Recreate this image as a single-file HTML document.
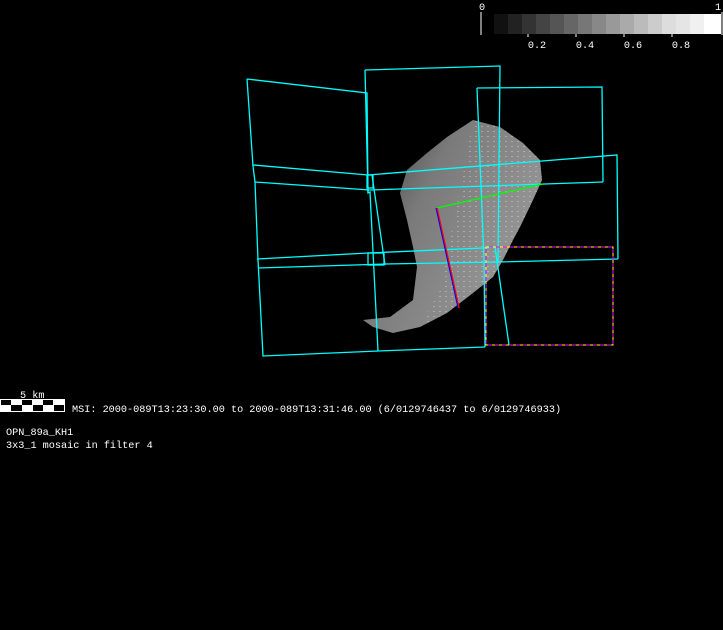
<!DOCTYPE html>
<html><head><style>
html,body{margin:0;padding:0;background:#000;width:723px;height:630px;overflow:hidden}
svg{display:block}
text{font-family:"Liberation Mono",monospace;font-size:10.2px;fill:#fff}
</style></head><body>
<svg width="723" height="630" viewBox="0 0 723 630">
<defs>
<linearGradient id="g" x1="0" y1="0" x2="1" y2="0.6">
<stop offset="0" stop-color="#3a3a3a"/><stop offset="0.4" stop-color="#7a7a7a"/><stop offset="1" stop-color="#9a9a9a"/>
</linearGradient>
<pattern id="dots" width="6" height="5" patternUnits="userSpaceOnUse">
<rect x="1" y="1" width="2" height="1" fill="#ccc"/>
</pattern>
</defs>
<polygon points="473,120 500,127 523,143 540,160 542,180 533,200 520,227 513,240 503,260 493,277 473,293 447,313 420,327 393,333 373,327 363,320 390,317 413,300 417,267 413,247 407,220 400,193 407,170 427,153 447,137" fill="url(#g)"/>
<polygon points="473,120 500,127 523,143 540,160 542,180 533,200 520,227 513,240 503,260 493,277 473,293 447,313 420,327 440,290 450,240 460,190" fill="url(#dots)" opacity="0.5"/>
<g fill="none" stroke="#0ff" stroke-width="1.3">
<polyline points="247,79 367,93 368,193"/>
<polyline points="247,79 253,166 255,182 258,260 263,356 378,351 485,347"/>
<polyline points="365,70 500,66 498,262"/>
<polyline points="365,70 368,193 370,192 378,351"/>
<polyline points="477,88 602,87 603,182"/>
<polyline points="477,88 484,260 485,347"/>
<polyline points="372,175 385,265"/>
<polyline points="253,165 368,175 617,155 618,259"/>
<polyline points="255,182 370,190 603,182"/>
<polyline points="257,259 368,253 483,248 495,247"/>
<polyline points="258,268 385,264 498,262 618,259"/>
<line x1="495" y1="247" x2="509" y2="345"/>
<rect x="368" y="253" width="16" height="12"/>
<rect x="367" y="175" width="6" height="13"/>
</g>
<rect x="486" y="247" width="127" height="98" fill="none" stroke="#ff0" stroke-dasharray="4,3"/>
<rect x="486" y="247" width="127" height="98" fill="none" stroke="#f0f" stroke-dasharray="4,3" stroke-dashoffset="4"/>
<line x1="437" y1="208" x2="543" y2="184" stroke="#0f0" stroke-width="1.3"/>
<line x1="437" y1="208" x2="459" y2="308" stroke="#f00" stroke-width="1.5"/>
<line x1="436" y1="208" x2="458" y2="308" stroke="#00f" stroke-width="1"/>
<g>
<rect x="494" y="14" width="14" height="20" fill="#111"/><rect x="508" y="14" width="14" height="20" fill="#222"/>
<rect x="522" y="14" width="14" height="20" fill="#333"/><rect x="536" y="14" width="14" height="20" fill="#444"/>
<rect x="550" y="14" width="14" height="20" fill="#555"/><rect x="564" y="14" width="14" height="20" fill="#666"/>
<rect x="578" y="14" width="14" height="20" fill="#777"/><rect x="592" y="14" width="14" height="20" fill="#888"/>
<rect x="606" y="14" width="14" height="20" fill="#999"/><rect x="620" y="14" width="14" height="20" fill="#aaa"/>
<rect x="634" y="14" width="14" height="20" fill="#bbb"/><rect x="648" y="14" width="14" height="20" fill="#ccc"/>
<rect x="662" y="14" width="14" height="20" fill="#ddd"/><rect x="676" y="14" width="14" height="20" fill="#e5e5e5"/>
<rect x="690" y="14" width="14" height="20" fill="#f0f0f0"/><rect x="704" y="14" width="17" height="20" fill="#fff"/>
</g>
<line x1="481" y1="12" x2="481" y2="35" stroke="#fff"/>
<line x1="722" y1="12" x2="722" y2="35" stroke="#fff"/>
<g stroke="#fff"><line x1="528" y1="34" x2="528" y2="37"/><line x1="576" y1="34" x2="576" y2="37"/><line x1="624" y1="34" x2="624" y2="37"/><line x1="672" y1="34" x2="672" y2="37"/></g>
<text x="479" y="10">0</text><text x="715" y="10">1</text>
<text x="537" y="48" text-anchor="middle">0.2</text><text x="585" y="48" text-anchor="middle">0.4</text><text x="633" y="48" text-anchor="middle">0.6</text><text x="681" y="48" text-anchor="middle">0.8</text>
<text x="20" y="398">5 km</text>
<rect x="0" y="399" width="65" height="13" fill="#fff"/>
<g fill="#000"><rect x="1" y="400" width="10" height="5"/><rect x="11" y="405" width="11" height="6"/><rect x="22" y="400" width="10" height="5"/><rect x="33" y="405" width="10" height="6"/><rect x="43" y="400" width="10" height="5"/><rect x="54" y="405" width="10" height="6"/></g>
<text x="72" y="412">MSI:  2000-089T13:23:30.00 to 2000-089T13:31:46.00 (6/0129746437 to 6/0129746933)</text>
<text x="6" y="435">OPN_89a_KH1</text>
<text x="6" y="448">3x3_1 mosaic in filter 4</text>
</svg>
</body></html>
